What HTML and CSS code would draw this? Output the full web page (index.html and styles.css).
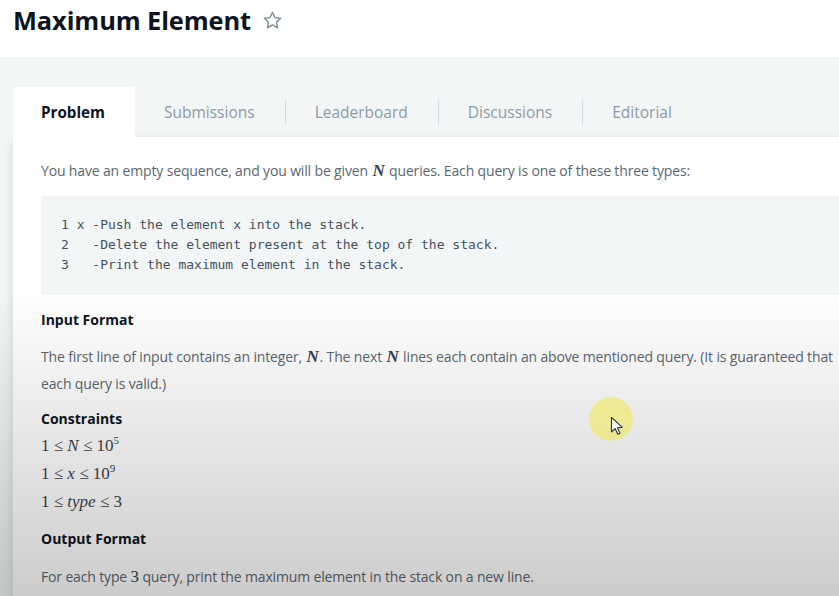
FILE: index.html
```html
<!DOCTYPE html>
<html>
<head>
<meta charset="utf-8">
<link rel="stylesheet" href="styles.css">
</head>
<body>
<header class="head">
  <h1 class="title">Maximum Element</h1>
  <svg class="star" width="21" height="21" viewBox="0 0 24 24"><path d="M12 2.6l2.8 6.1 6.6.7-4.9 4.5 1.4 6.6L12 17.1l-5.9 3.4 1.4-6.6-4.9-4.5 6.6-.7z" fill="none" stroke="#7a8f96" stroke-width="1.6" stroke-linejoin="round"/></svg>
</header>
<main class="band">
  <nav class="tabs">
    <div class="tab active">Problem</div>
    <div class="tab">Submissions</div>
    <div class="sep"></div>
    <div class="tab">Leaderboard</div>
    <div class="sep"></div>
    <div class="tab">Discussions</div>
    <div class="sep"></div>
    <div class="tab">Editorial</div>
  </nav>
  <section class="card">
    <p class="para first">You have an empty sequence, and you will be given <i class="mv">N</i> queries. Each query is one of these three types:</p>
    <pre class="code">1 x -Push the element x into the stack.
2   -Delete the element present at the top of the stack.
3   -Print the maximum element in the stack.</pre>
    <h3 class="head3">Input Format</h3>
    <p class="para">The first line of input contains an integer, <i class="mv">N</i>. The next <i class="mv">N</i> lines each contain an above mentioned query. (It is guaranteed that each query is valid.)</p>
    <h3 class="head3 tight">Constraints</h3>
    <div class="math">1 ≤ <i>N</i> ≤ 10<sup>5</sup></div>
    <div class="math">1 ≤ <i>x</i> ≤ 10<sup>9</sup></div>
    <div class="math">1 ≤ <i>type</i> ≤ 3</div>
    <h3 class="head3 out">Output Format</h3>
    <p class="para">For each type <span class="mn">3</span> query, print the maximum element in the stack on a new line.</p>
  </section>
</main>
<div class="vignette"></div>
<div class="pointer">
  <svg width="14" height="20" viewBox="0 0 14 20"><path d="M1.5 1.5v14.5l3.6-3.4 2.6 5.6 2.3-1-2.6-5.5 4.9-.3z" fill="#fff" stroke="#333" stroke-width="1.1" stroke-linejoin="round"/></svg>
</div>
</body>
</html>
```
FILE: styles.css
```css
html, body {
  margin: 0;
  padding: 0;
  background: #ffffff;
  overflow: hidden;
  height: 596px;
}
body {
  font-family: "Open Sans", "Liberation Sans", sans-serif;
  color: #39424e;
  position: relative;
}
.head {
  height: 57px;
  display: flex;
  align-items: flex-start;
  padding-left: 13px;
  box-sizing: border-box;
}
.title {
  margin: 0;
  margin-top: 2px;
  font-size: 25.4px;
  line-height: 36px;
  font-weight: 700;
  color: #0e141e;
  letter-spacing: -0.1px;
}
.star {
  margin-left: 11px;
  margin-top: 10px;
}
.band {
  background: #f3f6f7;
  padding: 30px 0 0 13px;
  min-height: 560px;
  overflow: hidden;
}
.tabs {
  display: flex;
  align-items: center;
  height: 50px;
  width: 900px;
  box-shadow: inset 0 -6px 8px -6px rgba(0,0,0,0.06);
}
.tab {
  font-size: 15.5px;
  color: #8c9ba4;
  padding: 0 30px 0 29px;
  height: 50px;
  line-height: 50px;
}
.tab.active {
  background: #ffffff;
  color: #0e141e;
  font-weight: 700;
  padding: 0 30px 0 28px;
  font-size: 15.2px;
}
.sep {
  width: 1px;
  height: 25px;
  background: #d3dadd;
}
.card {
  background: #ffffff;
  width: 812px;
  padding: 20px 28px 20px 28px;
  box-shadow: -3px 4px 8px rgba(0,0,0,0.08);
}
.para {
  margin: 0;
  font-size: 14px;
  line-height: 27px;
  color: #5b6770;
  letter-spacing: -0.15px;
}
.mv {
  font-family: "Liberation Serif", "DejaVu Serif", serif;
  font-style: italic;
  font-weight: 700;
  font-size: 17px;
  line-height: 20px;
  color: #39424e;
  padding: 0 1px;
}
.mn {
  font-family: "Liberation Serif", "DejaVu Serif", serif;
  font-size: 17px;
  line-height: 20px;
  color: #39424e;
}
.code {
  margin: 12px 0 0 0;
  background: #f3f6f7;
  padding: 19px 20px 20px 20px;
  font-family: "DejaVu Sans Mono", "Liberation Mono", monospace;
  font-size: 13px;
  line-height: 20px;
  color: #47515c;
}
.head3 {
  margin: 15px 0 13px 0;
  font-size: 14px;
  line-height: 20px;
  font-weight: 700;
  color: #0e141e;
}
.head3.tight {
  margin: 12px 0 3px 0;
}
.head3.out {
  margin: 13px 0 14px 0;
}
.math {
  font-family: "Liberation Serif", "DejaVu Serif", serif;
  font-size: 17px;
  line-height: 28px;
  color: #39424e;
}
.math sup {
  font-size: 11px;
  line-height: 0;
  vertical-align: 7px;
}
.vignette {
  position: absolute;
  left: 0;
  top: 0;
  width: 839px;
  height: 596px;
  pointer-events: none;
  background: linear-gradient(to bottom, rgba(0,0,0,0) 0px, rgba(0,0,0,0) 290px, rgba(0,0,0,0.2) 596px);
}
.pointer {
  position: absolute;
  left: 589px;
  top: 397px;
  width: 44px;
  height: 44px;
  border-radius: 50%;
  background: rgba(240, 232, 120, 0.75);
}
.pointer svg {
  position: absolute;
  left: 21px;
  top: 19px;
}
```
